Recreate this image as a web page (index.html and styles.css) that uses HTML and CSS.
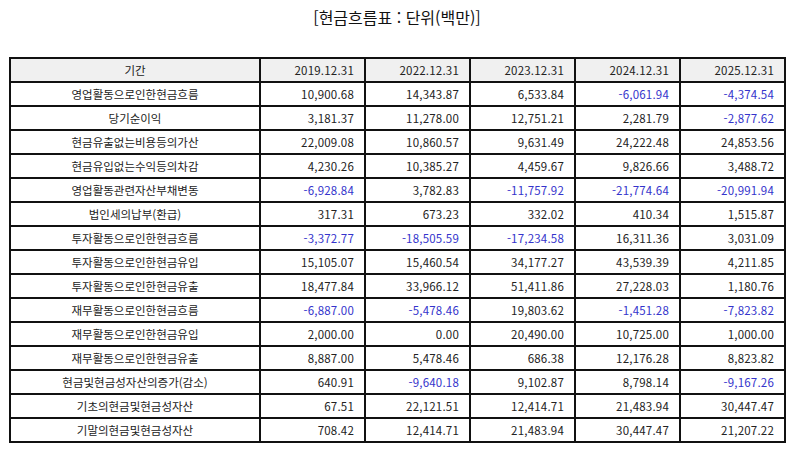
FILE: index.html
```html
<!DOCTYPE html>
<html lang="ko">
<head>
<meta charset="utf-8">
<link rel="stylesheet" href="styles.css">
</head>
<body>
<h1 class="title">[현금흐름표 : 단위(백만)]</h1>
<table class="cf">
<colgroup><col class="c-label"><col class="c-num"><col class="c-num"><col class="c-num"><col class="c-num"><col class="c-num"></colgroup>
<thead>
<tr><th class="lbl">기간</th><th>2019.12.31</th><th>2022.12.31</th><th>2023.12.31</th><th>2024.12.31</th><th>2025.12.31</th></tr>
</thead>
<tbody>
<tr><td class="lbl">영업활동으로인한현금흐름</td><td>10,900.68</td><td>14,343.87</td><td>6,533.84</td><td class="neg">-6,061.94</td><td class="neg">-4,374.54</td></tr>
<tr><td class="lbl">당기순이익</td><td>3,181.37</td><td>11,278.00</td><td>12,751.21</td><td>2,281.79</td><td class="neg">-2,877.62</td></tr>
<tr><td class="lbl">현금유출없는비용등의가산</td><td>22,009.08</td><td>10,860.57</td><td>9,631.49</td><td>24,222.48</td><td>24,853.56</td></tr>
<tr><td class="lbl">현금유입없는수익등의차감</td><td>4,230.26</td><td>10,385.27</td><td>4,459.67</td><td>9,826.66</td><td>3,488.72</td></tr>
<tr><td class="lbl">영업활동관련자산부채변동</td><td class="neg">-6,928.84</td><td>3,782.83</td><td class="neg">-11,757.92</td><td class="neg">-21,774.64</td><td class="neg">-20,991.94</td></tr>
<tr><td class="lbl">법인세의납부(환급)</td><td>317.31</td><td>673.23</td><td>332.02</td><td>410.34</td><td>1,515.87</td></tr>
<tr><td class="lbl">투자활동으로인한현금흐름</td><td class="neg">-3,372.77</td><td class="neg">-18,505.59</td><td class="neg">-17,234.58</td><td>16,311.36</td><td>3,031.09</td></tr>
<tr><td class="lbl">투자활동으로인한현금유입</td><td>15,105.07</td><td>15,460.54</td><td>34,177.27</td><td>43,539.39</td><td>4,211.85</td></tr>
<tr><td class="lbl">투자활동으로인한현금유출</td><td>18,477.84</td><td>33,966.12</td><td>51,411.86</td><td>27,228.03</td><td>1,180.76</td></tr>
<tr><td class="lbl">재무활동으로인한현금흐름</td><td class="neg">-6,887.00</td><td class="neg">-5,478.46</td><td>19,803.62</td><td class="neg">-1,451.28</td><td class="neg">-7,823.82</td></tr>
<tr><td class="lbl">재무활동으로인한현금유입</td><td>2,000.00</td><td>0.00</td><td>20,490.00</td><td>10,725.00</td><td>1,000.00</td></tr>
<tr><td class="lbl">재무활동으로인한현금유출</td><td>8,887.00</td><td>5,478.46</td><td>686.38</td><td>12,176.28</td><td>8,823.82</td></tr>
<tr><td class="lbl">현금및현금성자산의증가(감소)</td><td>640.91</td><td class="neg">-9,640.18</td><td>9,102.87</td><td>8,798.14</td><td class="neg">-9,167.26</td></tr>
<tr><td class="lbl">기초의현금및현금성자산</td><td>67.51</td><td>22,121.51</td><td>12,414.71</td><td>21,483.94</td><td>30,447.47</td></tr>
<tr><td class="lbl">기말의현금및현금성자산</td><td>708.42</td><td>12,414.71</td><td>21,483.94</td><td>30,447.47</td><td>21,207.22</td></tr>
</tbody>
</table>
</body>
</html>
```
FILE: styles.css
```css
html, body {
  margin: 0;
  padding: 0;
  background: #ffffff;
}
body {
  padding: 6px 9px 0 9px;
  font-family: "Noto Sans CJK KR", "Noto Sans", sans-serif;
  color: #111;
}
.title {
  margin: 0 0 29px 0;
  height: 22px;
  line-height: 22px;
  font-size: 16px;
  font-weight: normal;
  text-align: center;
  color: #111;
}
.cf {
  border-collapse: collapse;
  table-layout: fixed;
  width: 777px;
  font-size: 11.5px;
}
.c-label { width: 250px; }
.c-num { width: 105px; }
.cf th, .cf td {
  border: 2px solid #111;
  height: 22px;
  padding: 0 10px 0 4px;
  text-align: right;
  font-weight: normal;
  line-height: 14px;
  white-space: nowrap;
  color: #222;
  letter-spacing: 0.2px;
}
.cf thead th {
  background: #f0f0f0;
}
.cf .lbl {
  text-align: center;
  padding: 0 4px;
  letter-spacing: 0;
}
.cf .neg {
  color: #3434cc;
}
```
